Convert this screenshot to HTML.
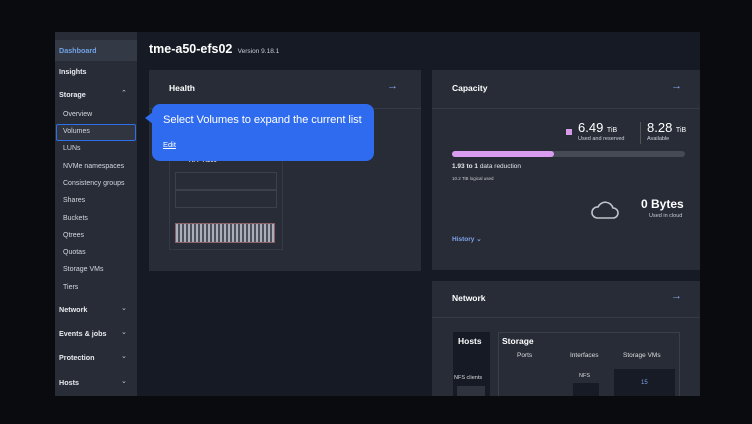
<!DOCTYPE html>
<html><head><meta charset="utf-8"><style>
*{margin:0;padding:0;box-sizing:border-box}
body{width:752px;height:424px;background:#0a0b0f;font-family:"Liberation Sans",sans-serif;position:relative;overflow:hidden;color:#e6e8ec}
.abs{position:absolute}
#app{left:55px;top:32px;width:645px;height:364px;background:#151a24;overflow:hidden}
#side{left:55px;top:32px;width:82px;height:364px;background:#272c37}
.si{position:absolute;left:4px;font-size:7px;color:#d4d7dd}
.sh{position:absolute;left:4px;font-size:7.2px;font-weight:bold;color:#e8eaee}
.chev{position:absolute;left:66px;font-size:7px;color:#c8ccd3}
.card{position:absolute;background:#272c37;overflow:hidden}
.ct{position:absolute;font-size:8.5px;font-weight:bold;color:#fff}
.arr{position:absolute;font-size:11px;font-weight:bold;color:#8aa8ee}
</style></head><body>
<div id="app" class="abs"></div>
<div id="side" class="abs">
  <div class="abs" style="left:0;top:8px;width:82px;height:21px;background:#343946"></div>
  <div class="sh" style="top:14px;color:#6fa3e6">Dashboard</div>
  <div class="sh" style="top:35px">Insights</div>
  <div class="sh" style="top:58px">Storage</div><div class="chev" style="top:57px">⌃</div>
  <div class="si" style="left:8px;top:79px">Overview</div>
  <div class="abs" style="left:1px;top:92px;width:80px;height:17px;border:1.5px solid #2f6fe8;border-radius:2px;background:#30353f"></div>
  <div class="si" style="left:8px;top:96px">Volumes</div>
  <div class="si" style="left:8px;top:113px">LUNs</div>
  <div class="si" style="left:8px;top:131px">NVMe namespaces</div>
  <div class="si" style="left:8px;top:148px">Consistency groups</div>
  <div class="si" style="left:8px;top:165px">Shares</div>
  <div class="si" style="left:8px;top:183px">Buckets</div>
  <div class="si" style="left:8px;top:200px">Qtrees</div>
  <div class="si" style="left:8px;top:217px">Quotas</div>
  <div class="si" style="left:8px;top:234px">Storage VMs</div>
  <div class="si" style="left:8px;top:252px">Tiers</div>
  <div class="sh" style="top:273px">Network</div><div class="chev" style="top:272px">⌄</div>
  <div class="sh" style="top:297px">Events &amp; jobs</div><div class="chev" style="top:296px">⌄</div>
  <div class="sh" style="top:321px">Protection</div><div class="chev" style="top:320px">⌄</div>
  <div class="sh" style="top:346px">Hosts</div><div class="chev" style="top:345px">⌄</div>
</div>
<div class="abs" style="left:149px;top:42px;font-size:12.5px;font-weight:bold;color:#fff">tme-a50-efs02 <span style="font-size:6.5px;font-weight:normal;color:#c8ccd3">&nbsp;Version 9.18.1</span></div>

<div class="card" style="left:149px;top:70px;width:272px;height:201px">
  <div class="ct" style="left:20px;top:13px">Health</div><div class="arr" style="left:238px;top:10px">→</div>
  <div class="abs" style="left:0;top:38px;width:272px;height:1px;background:#343a46"></div>
  <div class="abs" style="left:20px;top:70px;width:114px;height:110px;border:1px solid #353a46"></div>
  <div class="abs" style="left:40px;top:88px;font-size:6px;color:#ddd;font-weight:bold">AFF-A300</div>
  <div class="abs" style="left:26px;top:102px;width:102px;height:18px;border:1px solid #3b404c"></div>
  <div class="abs" style="left:26px;top:120px;width:102px;height:18px;border:1px solid #3b404c"></div>
  <div class="abs" style="left:26px;top:153px;width:100px;height:20px;border:1px solid #8a6068;background:repeating-linear-gradient(90deg,#aaaeb6 0 2px,#4a4f5a 2px 4px)"></div>
</div>

<div class="card" style="left:432px;top:70px;width:268px;height:200px">
  <div class="ct" style="left:20px;top:13px">Capacity</div><div class="arr" style="left:239px;top:10px">→</div>
  <div class="abs" style="left:0;top:38px;width:268px;height:1px;background:#343a46"></div>
  <div class="abs" style="left:134px;top:59px;width:6px;height:6px;background:#d79be8"></div>
  <div class="abs" style="left:146px;top:50px;font-size:13px;color:#fff">6.49 <span style="font-size:7px">TiB</span></div>
  <div class="abs" style="left:146px;top:66px;font-size:5.5px;color:#d0d3d8">Used and reserved</div>
  <div class="abs" style="left:208px;top:52px;width:1px;height:22px;background:#555"></div>
  <div class="abs" style="left:215px;top:50px;font-size:13px;color:#fff">8.28 <span style="font-size:7px">TiB</span></div>
  <div class="abs" style="left:215px;top:66px;font-size:5.5px;color:#d0d3d8">Available</div>
  <div class="abs" style="left:20px;top:81px;width:233px;height:6px;border-radius:3px;background:#454a55"></div>
  <div class="abs" style="left:20px;top:81px;width:102px;height:6px;border-radius:3px;background:#da9cf0"></div>
  <div class="abs" style="left:20px;top:93px;font-size:6.5px;color:#e6e8ec"><b>1.93 to 1</b> data reduction</div>
  <div class="abs" style="left:20px;top:106px;font-size:4.5px;color:#ccc">10.2 TiB logical used</div>
  <svg class="abs" style="left:158px;top:128px" width="30" height="22" viewBox="0 0 30 22"><path d="M7 20h16a5 5 0 0 0 0-10 8 8 0 0 0-15-1 5.5 5.5 0 0 0-1 11z" fill="none" stroke="#bfc3ca" stroke-width="1.6"/></svg>
  <div class="abs" style="left:209px;top:127px;font-size:12px;font-weight:bold;color:#fff">0 Bytes</div>
  <div class="abs" style="left:217px;top:143px;font-size:5.5px;color:#c8ccd2">Used in cloud</div>
  <div class="abs" style="left:20px;top:165px;font-size:6.5px;font-weight:bold;color:#7fa3ea">History ⌄</div>
</div>

<div class="card" style="left:432px;top:281px;width:268px;height:115px">
  <div class="ct" style="left:20px;top:12px">Network</div><div class="arr" style="left:239px;top:9px">→</div>
  <div class="abs" style="left:0;top:36px;width:268px;height:1px;background:#343a46"></div>
  <div class="abs" style="left:21px;top:51px;width:37px;height:70px;background:#151a24"></div>
  <div class="abs" style="left:26px;top:55px;font-size:8.5px;font-weight:bold;color:#fff">Hosts</div>
  <div class="abs" style="left:22px;top:94px;font-size:5.5px;color:#ddd">NFS clients</div>
  <div class="abs" style="left:25px;top:105px;width:28px;height:15px;background:#2e333e"></div>
  <div class="abs" style="left:66px;top:51px;width:182px;height:70px;border:1px solid #3a3f4a"></div>
  <div class="abs" style="left:70px;top:55px;font-size:8.5px;font-weight:bold;color:#fff">Storage</div>
  <div class="abs" style="left:85px;top:71px;font-size:6.5px;color:#ddd">Ports</div>
  <div class="abs" style="left:138px;top:71px;font-size:6.5px;color:#ddd">Interfaces</div>
  <div class="abs" style="left:182px;top:88px;width:61px;height:30px;background:#161b26"></div>
  <div class="abs" style="left:191px;top:71px;font-size:6.5px;color:#ddd">Storage VMs</div>
  <div class="abs" style="left:209px;top:99px;font-size:6px;color:#7fa3ea">15</div>
  <div class="abs" style="left:147px;top:92px;font-size:5.5px;color:#ddd">NFS</div>
  <div class="abs" style="left:141px;top:102px;width:26px;height:16px;background:#161b26"></div>
</div>

<div class="abs" style="left:152px;top:104px;width:222px;height:57px;background:#2f6bef;border-radius:8px"></div>
<div class="abs" style="left:145px;top:112px;width:0;height:0;border-top:6px solid transparent;border-bottom:6px solid transparent;border-right:8px solid #2f6bef"></div>
<div class="abs" style="left:163px;top:114px;font-size:11.2px;color:#fff;letter-spacing:-0.1px">Select Volumes to expand the current list</div>
<div class="abs" style="left:163px;top:140px;font-size:7.5px;color:#fff;text-decoration:underline">Edit</div>
</body></html>
